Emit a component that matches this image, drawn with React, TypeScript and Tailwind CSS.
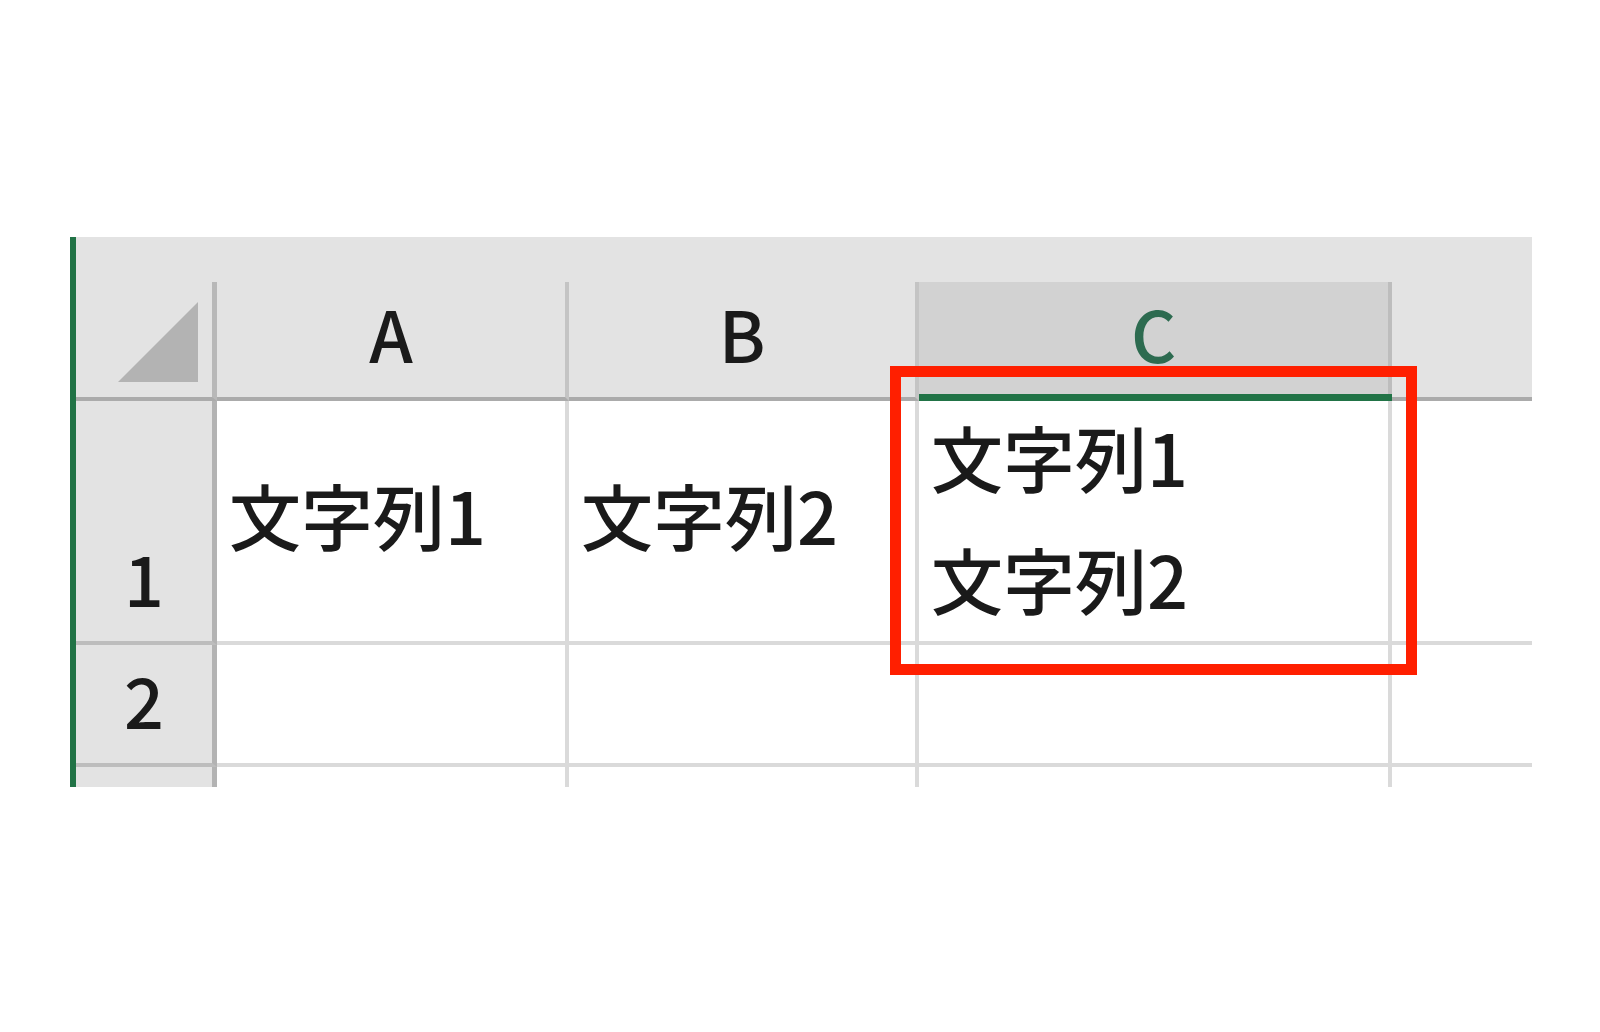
import type { ReactNode } from 'react';

// column widths include the 4px grid line on the right
const cols = [
  { key: 'A', width: 'w-[352px]' },
  { key: 'B', width: 'w-[350px]' },
  { key: 'C', width: 'w-[473px]' },
];

function RowHeader({ label, className }: { label?: string; className: string }) {
  return (
    <div
      className={`flex w-[141px] shrink-0 items-end justify-center border-r-[5px] border-r-[#b3b3b3] bg-[#e3e3e3] pb-[3px] text-[70px] leading-[122px] ${className}`}
    >
      {label}
    </div>
  );
}

function Cell({ width, children, className = '' }: { width: string; children?: ReactNode; className?: string }) {
  return (
    <div className={`${width} flex shrink-0 border-r-4 border-b-4 border-[#dadada] pl-3 text-[72px] leading-[122px] ${className}`}>
      {children}
    </div>
  );
}

export default function App() {
  return (
    <div className="min-h-screen bg-white pl-[70px] pt-[237px] font-['Noto_Sans_CJK_JP',sans-serif] font-medium text-[#1a1a1a]">
      <div className="relative flex w-[1462px]">
        <div className="w-[6px] shrink-0 bg-[#217346]" />

        <div className="flex flex-1 flex-col">
          {/* top band above column headers */}
          <div className="h-[45px] bg-[#e3e3e3]" />

          {/* column headers */}
          <div className="flex h-[119px]">
            <div className="flex w-[141px] shrink-0 items-end justify-end border-r-[5px] border-b-4 border-r-[#b8b8b8] border-b-[#ababab] bg-[#e3e3e3] pr-[14px] pb-[15px]">
              <svg width="80" height="80" viewBox="0 0 80 80">
                <polygon points="80,0 80,80 0,80" fill="#b3b3b3" />
              </svg>
            </div>
            {cols.map((col) =>
              col.key === 'C' ? (
                <div key={col.key} className={`${col.width} flex shrink-0 flex-col`}>
                  <div className="flex flex-1 items-center justify-center border-r-4 border-r-[#bdbdbd] bg-[#d2d2d2] pb-[10px] text-[70px] leading-none text-[#2d6b50]">
                    {col.key}
                  </div>
                  <div className="h-[7px] bg-[#217346]" />
                </div>
              ) : (
                <div
                  key={col.key}
                  className={`${col.width} flex shrink-0 items-center justify-center border-r-4 border-b-4 border-r-[#c4c4c4] border-b-[#ababab] bg-[#e3e3e3] pb-[14px] text-[70px] leading-none`}
                >
                  {col.key}
                </div>
              )
            )}
            <div className="flex-1 border-b-4 border-b-[#ababab] bg-[#e3e3e3]" />
          </div>

          {/* row 1 */}
          <div className="flex h-[244px]">
            <RowHeader label="1" className="border-b-4 border-b-[#bdbdbd]" />
            <Cell width={cols[0].width} className="items-center pb-[15px]">
              文字列1
            </Cell>
            <Cell width={cols[1].width} className="items-center pb-[15px]">
              文字列2
            </Cell>
            <Cell width={cols[2].width} className="flex-col justify-center pb-[9px]">
              <span>文字列1</span>
              <span>文字列2</span>
            </Cell>
            <div className="flex-1 border-b-4 border-[#dadada]" />
          </div>

          {/* row 2 */}
          <div className="flex h-[122px]">
            <RowHeader label="2" className="border-b-4 border-b-[#bdbdbd]" />
            {cols.map((col) => (
              <Cell key={col.key} width={col.width} />
            ))}
            <div className="flex-1 border-b-4 border-[#dadada]" />
          </div>

          {/* row 3, cut off */}
          <div className="flex h-[20px]">
            <RowHeader className="" />
            {cols.map((col) => (
              <div key={col.key} className={`${col.width} shrink-0 border-r-4 border-[#dadada]`} />
            ))}
          </div>
        </div>

        {/* red highlight around C1 */}
        <div className="pointer-events-none absolute left-[820px] top-[129px] h-[309px] w-[527px] border-[11px] border-[#ff1f00]" />
      </div>
    </div>
  );
}
